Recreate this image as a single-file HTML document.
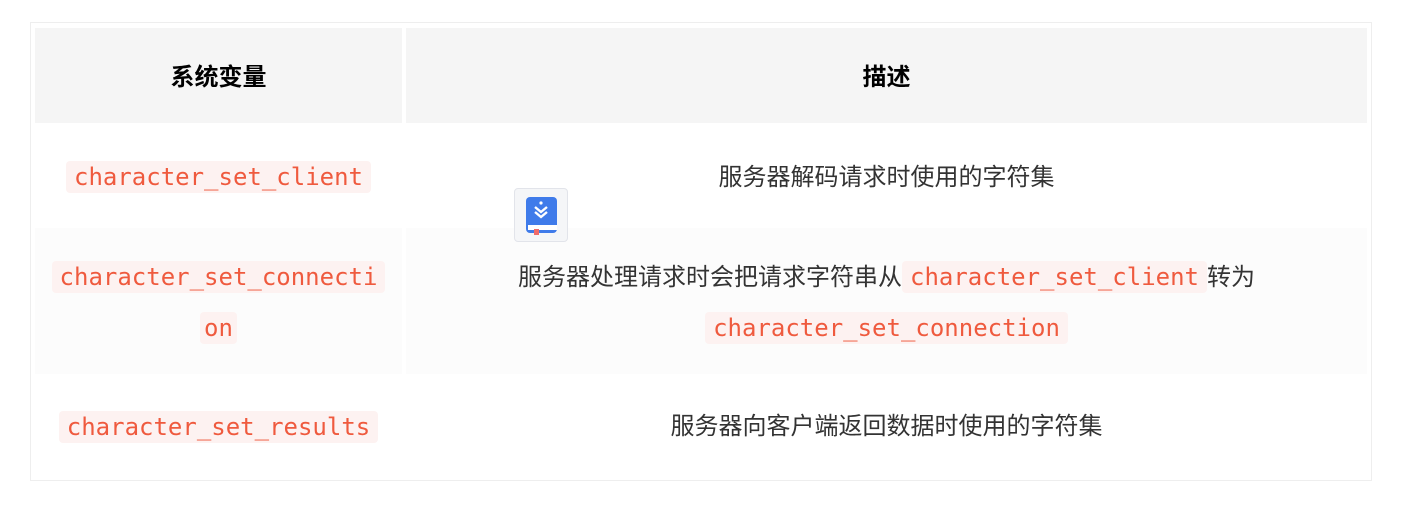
<!DOCTYPE html>
<html><head><meta charset="utf-8"><style>
body{margin:0;width:1420px;height:520px;background:#fff;position:relative;font-family:"Liberation Sans","Noto Sans CJK SC",sans-serif;color:#333;}
.box{position:absolute;left:30px;top:22px;width:1340px;height:457px;border:1px solid #eeeeee;}
.c{position:absolute;display:flex;flex-direction:column;align-items:center;justify-content:center;text-align:center;font-size:24px;line-height:50px;padding-top:4px;box-sizing:border-box;}
.h{background:#f5f5f5;font-weight:bold;color:#000;}
.g{background:#fcfcfc;}
code{font-family:"DejaVu Sans Mono","Liberation Mono",monospace;font-size:24px;color:#ef5a3e;background:#fdf2f1;padding:2px 8px;border-radius:4px;}
</style></head><body>
<div class="box"></div>
<div class="c h" style="left:35px;top:28px;width:367px;height:95px">系统变量</div>
<div class="c h" style="left:406px;top:28px;width:961px;height:95px">描述</div>
<div class="c" style="left:35px;top:123px;width:367px;height:105px"><div><code>character_set_client</code></div></div>
<div class="c" style="left:406px;top:123px;width:961px;height:105px"><div>服务器解码请求时使用的字符集</div></div>
<div class="c g" style="left:35px;top:228px;width:367px;height:146px"><div><code>character_set_connecti</code></div><div><code style="padding:2px 4px">on</code></div></div>
<div class="c g" style="left:406px;top:228px;width:961px;height:146px"><div>服务器处理请求时会把请求字符串从<code>character_set_client</code>转为</div><div><code>character_set_connection</code></div></div>
<div class="c" style="left:35px;top:374px;width:367px;height:102px"><div><code>character_set_results</code></div></div>
<div class="c" style="left:406px;top:374px;width:961px;height:102px"><div>服务器向客户端返回数据时使用的字符集</div></div>
<div style="position:absolute;left:514px;top:188px;width:54px;height:54px;border:1px solid #e2e4ea;border-radius:4px;background:#f5f6f8;box-sizing:border-box;">
<svg width="54" height="54" viewBox="0 0 54 54" style="position:absolute;left:-1px;top:-1px">
<rect x="12" y="9" width="31" height="36" rx="4" fill="#3f7bea"/>
<rect x="14" y="37" width="29" height="5" fill="#fff"/>
<rect x="20" y="41" width="5" height="6" fill="#f06a6a"/>
<path d="M21 19l6 5 6-5M21 24l6 5 6-5" stroke="#fff" stroke-width="2.4" fill="none"/>
<circle cx="27" cy="15" r="1.6" fill="#fff"/>
</svg></div>
</body></html>
